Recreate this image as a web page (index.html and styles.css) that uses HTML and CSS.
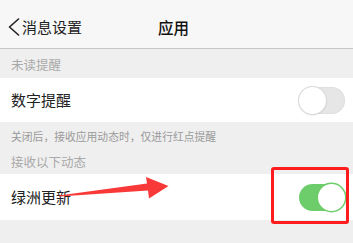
FILE: index.html
```html
<!DOCTYPE html>
<html lang="zh">
<head>
<meta charset="utf-8">
<link rel="stylesheet" href="styles.css">
</head>
<body>
<div class="page">
  <header class="nav">
    <div class="back">
      <svg class="chev" width="12" height="18" viewBox="0 0 12 18"><polyline points="10.5,1 1.5,9 10.5,17" fill="none" stroke="#222" stroke-width="1.6" stroke-linecap="round" stroke-linejoin="round"/></svg>
      <span>消息设置</span>
    </div>
    <div class="title">应用</div>
    <div></div>
  </header>
  <div class="label first">未读提醒</div>
  <div class="row row1">
    <span class="row-text">数字提醒</span>
    <span class="switch off"><span class="knob"></span></span>
  </div>
  <div class="note">关闭后，接收应用动态时，仅进行红点提醒</div>
  <div class="label second">接收以下动态</div>
  <div class="row row2">
    <span class="row-text">绿洲更新</span>
    <span class="switch on"><span class="knob"></span></span>
  </div>
  <div class="highlight"></div>
  <svg class="arrow" width="353" height="243" viewBox="0 0 353 243">
    <polygon points="59,195.5 147,183.5 146,177 168.5,186 149,198.5 148,190.5 59,196.5" fill="#f93838"/>
  </svg>
</div>
</body>
</html>
```
FILE: styles.css
```css
* { box-sizing: border-box; }
html, body { margin: 0; padding: 0; }
body {
  background: #efefef;
  font-family: "Noto Sans CJK SC", "Noto Sans", sans-serif;
  color: #222;
}
.page {
  position: relative;
  width: 353px;
  height: 243px;
  overflow: hidden;
}
.nav {
  height: 49px;
  background: #f7f7f7;
  border-bottom: 1px solid #c6c6c6;
  display: grid;
  grid-template-columns: 1fr auto 1fr;
  align-items: center;
  padding: 6px 14px 0 8px;
}
.back {
  display: flex;
  align-items: center;
  font-size: 15px;
  color: #222;
  line-height: 18px;
}
.chev { margin-right: 2px; }
.title {
  font-size: 15.5px;
  font-weight: 500;
  color: #111;
  line-height: 18px;
}
.label {
  font-size: 12.5px;
  color: #a9a9a9;
  line-height: 16px;
  padding-left: 11px;
}
.label.first { height: 29px; padding-top: 8px; }
.label.second { height: 31px; padding-top: 11px; }
.row {
  background: #fff;
  display: flex;
  align-items: center;
  justify-content: space-between;
  padding: 0 8px 0 11px;
}
.row1 { height: 44px; }
.row2 { height: 46px; }
.row-text { font-size: 15px; color: #222; line-height: 18px; }
.note {
  font-size: 10.8px;
  color: #9a9a9a;
  line-height: 14px;
  padding: 7px 11px 0;
  height: 21px;
}
.switch {
  position: relative;
  width: 46px;
  height: 27px;
  border-radius: 14px;
  display: block;
}
.switch.off {
  background: #e6e6e6;
  box-shadow: inset 0 0 0 1px #e0e0e0;
}
.switch.on { background: #6ccd6a; }
.knob {
  position: absolute;
  top: 0;
  width: 27px;
  height: 27px;
  border-radius: 50%;
  background: #fff;
}
.switch.off .knob { left: 0; box-shadow: 0 0 0 1px #d8d8d8, 0 1px 2px rgba(0,0,0,0.15); }
.switch.on .knob { right: 0; box-shadow: 0 0 0 1.5px #6ccd6a; }
.highlight {
  position: absolute;
  left: 271px;
  top: 167px;
  width: 78px;
  height: 57px;
  border: 3px solid #ff1c1c;
  border-radius: 3px;
}
.arrow {
  position: absolute;
  left: 0;
  top: 0;
  pointer-events: none;
}
```
